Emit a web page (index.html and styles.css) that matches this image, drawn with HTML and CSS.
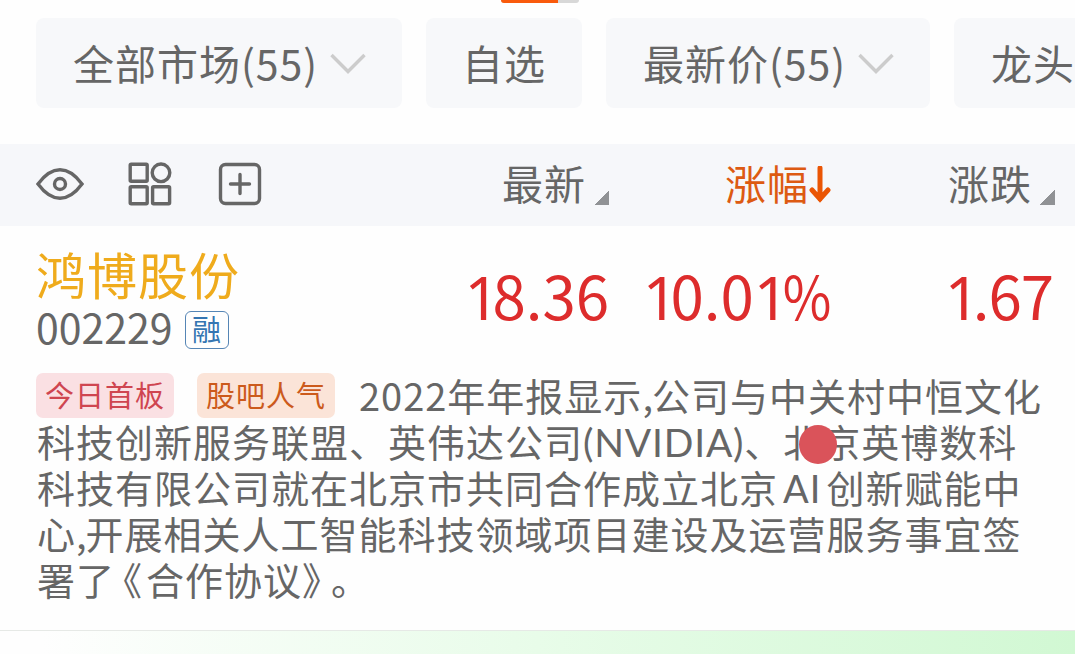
FILE: index.html
```
<!DOCTYPE html>
<html lang="zh-CN">
<head>
    <meta charset="UTF-8">
    <title>自选股</title>
    <link rel="stylesheet" href="styles.css">
</head>
<body>
    <div class="page">
        <!-- 滑动指示条 -->
        <div class="indicator"><span></span></div>
        <!-- 筛选 -->
        <div class="filters">
            <div class="filter all">全部市场(55)
                <svg width="36" height="22" viewBox="0 0 36 22"><path d="M1.5 2L18 18.5L34.5 2"/></svg>
            </div>
            <div class="filter own">自选</div>
            <div class="filter price">最新价(55)
                <svg width="36" height="22" viewBox="0 0 36 22"><path d="M1.5 2L18 18.5L34.5 2"/></svg>
            </div>
            <div class="filter leader">龙头</div>
        </div>
        <!-- 表头 -->
        <div class="thead">
            <div class="tools">
                <svg width="48" height="44" viewBox="0 0 48 44"><path d="M2 22C16 3 32 3 46 22C32 41 16 41 2 22Z"/><circle cx="24" cy="22" r="5.5"/></svg>
                <svg width="44" height="44" viewBox="0 0 44 44"><rect x="2.2" y="2.2" width="17" height="17" rx="1"/><circle cx="33" cy="10.8" r="8.8"/><rect x="2.2" y="24.8" width="17" height="17" rx="1"/><rect x="24.6" y="24.8" width="17" height="17" rx="1"/></svg>
                <svg width="44" height="44" viewBox="0 0 44 44"><rect x="2.5" y="2.5" width="39" height="39" rx="5"/><path d="M22 12.5V31.5M12.5 22H31.5"/></svg>
            </div>
            <div class="col latest">最新<i class="corner"></i></div>
            <div class="col rate">涨幅<svg width="22" height="38" viewBox="0 0 22 38"><path d="M11 2V33M3 24L11 33L19 24"/></svg></div>
            <div class="col change">涨跌<i class="corner"></i></div>
        </div>
        <!-- 股票 -->
        <div class="stock">
            <div class="info">
                <div class="name">鸿博股份</div>
                <div class="code">002229<span class="margin">融</span></div>
            </div>
            <div class="num latest"><span class="one">1</span>8.36</div>
            <div class="num rate"><span class="one">1</span>0.0<span class="one">1</span><span class="percent">%</span></div>
            <div class="num change"><span class="one">1</span>.67</div>
        </div>
        <div class="desc">
            <div class="line"><span class="tag red">今日首板</span><span class="tag orange">股吧人气</span>2022年年报显示<span class="comma">,</span>公司与中关村中恒文化</div>
            <div class="line">科技创新服务联盟、英伟达公司<span class="en">(NVIDIA)</span>、<span class="marked">北<i class="dot"></i></span>京英博数科</div>
            <div class="line">科技有限公司就在北京市共同合作成立北京<span class="ai">AI</span>创新赋能中</div>
            <div class="line">心<span class="comma">,</span>开展相关人工智能科技领域项目建设及运营服务事宜签</div>
            <div class="line">署了<span class="open">《</span>合作协议<span class="close">》</span>。</div>
        </div>
        <div class="next"></div>
    </div>
</body>
</html>
```
FILE: styles.css
```
* {
    margin: 0;
    padding: 0;
    box-sizing: border-box;
}
body {
    font-family: "Noto Sans CJK SC", sans-serif;
    color: #666;
    background-color: #fefefe;
    overflow: hidden;
}
svg {
    fill: none;
    stroke: #666;
    stroke-width: 3.4;
    stroke-linecap: round;
    flex-shrink: 0;
}
.page {
    width: 1075px;
    height: 654px;
    overflow: hidden;
}
/* 顶部指示条 */
.indicator {
    width: 78px;
    height: 3px;
    margin-left: 501px;
    background-color: #d8d8d8;
    border-radius: 0 0 3px 3px;
    overflow: hidden;
}
.indicator span {
    display: block;
    width: 57px;
    height: 3px;
    background-color: #f95a0c;
}
/* 筛选按钮 */
.filters {
    display: flex;
    margin-top: 15px;
    padding-left: 36px;
    height: 90px;
}
.filter {
    display: flex;
    align-items: center;
    flex-shrink: 0;
    height: 90px;
    padding-left: 37px;
    padding-bottom: 3px;
    margin-right: 24px;
    border-radius: 8px;
    background-color: #f7f8fa;
    font-size: 41px;
    letter-spacing: 1px;
    white-space: nowrap;
}
.filter svg {
    margin-left: 12px;
    margin-top: 4px;
    stroke: #ccc;
    stroke-linecap: butt;
}
.filter.all {
    width: 366px;
}
.filter.own {
    width: 156px;
    padding-left: 36px;
}
.filter.price {
    width: 324px;
}
.filter.leader {
    width: 160px;
}
/* 表头 */
.thead {
    display: grid;
    grid-template-columns: 448px 161px 222px 244px;
    align-items: center;
    height: 82px;
    margin-top: 36px;
    background-color: #f6f7fa;
}
.tools {
    display: flex;
    padding-left: 36px;
    padding-bottom: 2px;
}
.tools svg {
    margin-right: 44px;
}
.tools svg:nth-child(2) {
    margin-right: 46px;
}
.col {
    display: flex;
    align-items: center;
    justify-content: flex-end;
    height: 82px;
    padding-bottom: 6px;
    font-size: 41px;
    letter-spacing: 1px;
    white-space: nowrap;
}
.corner {
    width: 15px;
    height: 15px;
    margin-left: 8px;
    margin-top: 30px;
    background: linear-gradient(135deg, transparent 50%, #909295 50%);
}
.col.change {
    padding-right: 20px;
}
.col.rate {
    color: #dd5a12;
}
.col.rate svg {
    margin-top: 5px;
    stroke: #ea5504;
    stroke-width: 5;
}
/* 股票信息 */
.stock {
    display: grid;
    grid-template-columns: 448px 161px 222px 244px;
    height: 144px;
}
.info {
    padding: 18px 0 0 36px;
}
.name {
    height: 59px;
    line-height: 59px;
    font-size: 50px;
    letter-spacing: 1px;
    color: #efab1c;
}
.code {
    display: flex;
    align-items: center;
    height: 46px;
    line-height: 46px;
    font-size: 41px;
}
.margin {
    width: 44px;
    height: 38px;
    margin-left: 12px;
    margin-top: 8px;
    border: 1.5px solid #5585b5;
    border-radius: 6px;
    line-height: 33px;
    font-size: 29px;
    text-align: center;
    color: #3475b2;
}
.num {
    line-height: 135px;
    font-size: 60px;
    text-align: right;
    white-space: nowrap;
    color: #dd2c2c;
}
/* 数字1用没有底横的字形 */
.one {
    font-family: "Noto Sans", sans-serif;
    font-size: 61px;
    line-height: 1;
    letter-spacing: -7px;
}
.percent {
    display: inline-block;
    margin-left: -6px;
    transform: scaleX(.88);
    transform-origin: right;
}
.num.change {
    padding-right: 22px;
    letter-spacing: -1px;
}
/* 说明文字 */
.desc {
    height: 260px;
    padding: 2px 0 0 37px;
}
.line {
    display: flex;
    align-items: center;
    height: 46px;
    line-height: 46px;
    font-size: 38px;
    letter-spacing: 1px;
    white-space: nowrap;
}
.tag {
    width: 138px;
    height: 45px;
    margin-right: 24px;
    margin-left: -1px;
    margin-top: 1px;
    border-radius: 7px;
    line-height: 43px;
    font-size: 29px;
    text-align: center;
    letter-spacing: 1px;
}
.tag.red {
    color: #cf4550;
    background-color: #fae0e3;
}
.tag.orange {
    color: #cc5a1c;
    background-color: #fbe4d8;
}
.comma {
    margin-right: -2px;
}
.en,
.ai {
    padding-top: 2px;
    font-family: Lato, sans-serif;
}
.en {
    font-size: 39px;
    letter-spacing: .8px;
}
.ai {
    margin: 0 5px;
}
.marked {
    position: relative;
}
/* 盖在文字上的红点 */
.dot {
    position: absolute;
    left: 16px;
    top: 7px;
    width: 38px;
    height: 39px;
    border-radius: 50%;
    background-color: #da535a;
}
.open {
    margin-left: -11px;
    margin-right: 3px;
}
.close {
    margin-right: -10px;
}
.next {
    height: 24px;
    border-top: 1px solid #e6e9e6;
    background: linear-gradient(90deg, #fefefe 4%, #e8fce9 50%, #d1f8d3 100%);
}
```
